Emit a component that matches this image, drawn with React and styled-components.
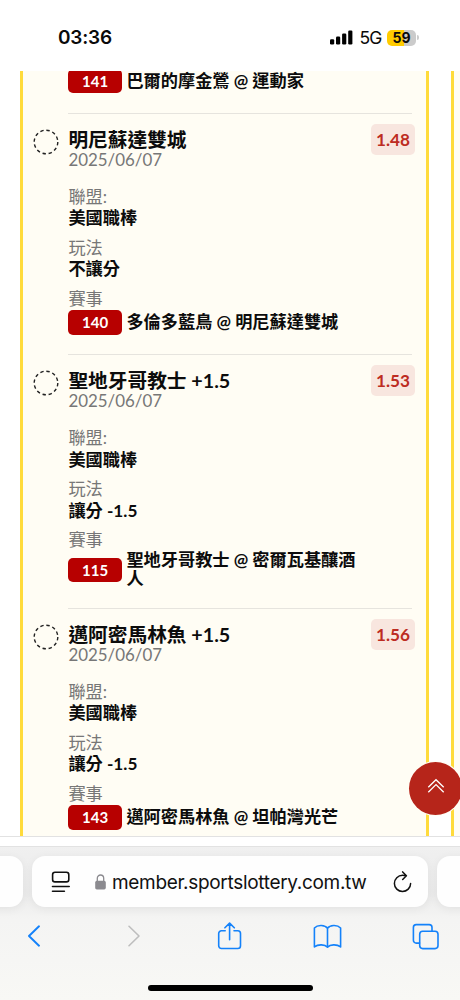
import React from "react";
import styled, { createGlobalStyle } from "styled-components";

const bets = [
    { team: "明尼蘇達雙城", date: "2025/06/07", league: "美國職棒", play: "不讓分", code: "140", match: "多倫多藍鳥 @ 明尼蘇達雙城", odds: "1.48" },
    { team: "聖地牙哥教士 +1.5", date: "2025/06/07", league: "美國職棒", play: "讓分 -1.5", code: "115", match: "聖地牙哥教士 @ 密爾瓦基釀酒人", odds: "1.53" },
    { team: "邁阿密馬林魚 +1.5", date: "2025/06/07", league: "美國職棒", play: "讓分 -1.5", code: "143", match: "邁阿密馬林魚 @ 坦帕灣光芒", odds: "1.56" },
];

function Match({ code, children }) {
    return (
        <MatchRow>
            <Code>{ code }</Code>
            <MatchName>{ children }</MatchName>
        </MatchRow>
    )
}

function Bet({ bet }) {
    return (
        <BetRow>
            <Pending viewBox="0 0 26 26">
                <circle cx="13" cy="13" r="11.8" />
            </Pending>
            <Details>
                <Team>{ bet.team }</Team>
                <BetDate>{ bet.date }</BetDate>
                <Label>聯盟:</Label>
                <Value>{ bet.league }</Value>
                <Label>玩法</Label>
                <Value>{ bet.play }</Value>
                <Label>賽事</Label>
                <Match code={ bet.code }>{ bet.match }</Match>
            </Details>
            <Odds>{ bet.odds }</Odds>
        </BetRow>
    )
}

function StatusBar() {
    return (
        <Status>
            <Clock>03:36</Clock>
            <Indicators>
                <svg width="23" height="15" viewBox="0 0 23 15">
                    <rect x="0" y="9.3" width="4.2" height="5.2" rx="1.2" />
                    <rect x="6" y="6.6" width="4.2" height="7.9" rx="1.2" />
                    <rect x="12.1" y="3.6" width="4.2" height="10.9" rx="1.2" />
                    <rect x="18.2" y="0.5" width="4.2" height="14" rx="1.2" />
                </svg>
                <Network>5G</Network>
                <Battery>59</Battery>
                <BatteryTip />
            </Indicators>
        </Status>
    )
}

function Browser() {
    return (
        <BrowserBar>
            <Tabs>
                <SideTab />
                <Address>
                    <svg width="20" height="22" viewBox="0 0 20 22" fill="none" stroke="#111" strokeWidth="1.6" strokeLinecap="round">
                        <rect x="1.6" y="1.3" width="16.2" height="9.6" rx="2.4" />
                        <path d="M1.5 15.5H18.2M1.5 20.3H13.4" />
                    </svg>
                    <Site>
                        <svg width="11" height="16" viewBox="0 0 11 16">
                            <rect x="0.2" y="6.8" width="10.6" height="8.6" rx="1.6" fill="#8b8a8f" />
                            <path d="M2.3 7V4.2a3.2 3.2 0 0 1 6.4 0V7" fill="none" stroke="#8b8a8f" strokeWidth="1.3" />
                        </svg>
                        <Url>member.sportslottery.com.tw</Url>
                    </Site>
                    <svg width="19" height="22" viewBox="0 0 19 22" fill="none" stroke="#111" strokeWidth="1.5" strokeLinecap="round" strokeLinejoin="round">
                        <path d="M17.6 12.4A8.1 8.1 0 1 1 9.5 4.3q1.9 0 3.6.4M9.7.9l3.7 3.8-3.7 3.8" />
                    </svg>
                </Address>
                <SideTab />
            </Tabs>
            <Toolbar>
                <svg width="14" height="22" viewBox="0 0 14 22">
                    <path d="M12 1.3 2 11l10 9.7" strokeWidth="1.9" />
                </svg>
                <ForwardIcon width="14" height="22" viewBox="0 0 14 22">
                    <path d="M2 1.3 12 11 2 20.7" />
                </ForwardIcon>
                <svg width="25" height="28" viewBox="0 0 25 28">
                    <path d="M8.2 8.8H4.4A2.7 2.7 0 0 0 1.7 11.5v12.3a2.7 2.7 0 0 0 2.7 2.7h16.4a2.7 2.7 0 0 0 2.7-2.7V11.5a2.7 2.7 0 0 0-2.7-2.7H17M12.6 17.8V1.3M7.9 5.8l4.7-4.7 4.7 4.7" />
                </svg>
                <svg width="29" height="25" viewBox="0 0 29 25">
                    <path d="M14.5 4.3C12.2.9 4.7.4 1.4 4v18.9c3.8-3 10.6-2.6 13.1.3 2.5-2.9 9.3-3.3 13.1-.3V4C24.3.4 16.8.9 14.5 4.3v18.7" />
                </svg>
                <svg width="27" height="27" viewBox="0 0 27 27">
                    <rect x="7.7" y="8.3" width="18.3" height="17.3" rx="3" />
                    <path d="M7.5 20.1H4.2A2.8 2.8 0 0 1 1.4 17.3V4.4A2.8 2.8 0 0 1 4.2 1.6H17.2A2.8 2.8 0 0 1 20 4.4V8" />
                </svg>
            </Toolbar>
            <HomeIndicator />
        </BrowserBar>
    )
}

export default function App() {
    return (
        <>
            <GlobalStyle />
            <Screen>
                <StatusBar />
                <Page>
                    <Card>
                        <FirstMatch>
                            <Match code="141">巴爾的摩金鶯 @ 運動家</Match>
                        </FirstMatch>
                        { bets.map((bet) => <Bet key={ bet.code } bet={ bet } />) }
                    </Card>
                    <NextCard />
                    <TopButton aria-label="top">
                        <svg width="18" height="16" viewBox="0 0 18 16" fill="none" stroke="#fff" strokeWidth="1.3">
                            <path d="M1.3 9.3 9 1.7l7.7 7.6M1.3 14.2 9 6.6l7.7 7.6" />
                        </svg>
                    </TopButton>
                </Page>
                <PageFooter />
                <Browser />
            </Screen>
        </>
    )
}

const GlobalStyle = createGlobalStyle`
    * {
        box-sizing: border-box;
    }
    body {
        margin: 0;
        background-color: #fff;
        font-family: Lato, 'Noto Sans CJK TC', sans-serif;
    }
    svg {
        display: block;
        flex-shrink: 0;
    }
`
const Screen = styled.div`
    display: flex;
    flex-direction: column;
    width: 460px;
    height: 1000px;
    overflow: hidden;
    background-color: #fff;
`
const Status = styled.div`
    display: flex;
    align-items: center;
    justify-content: space-between;
    height: 71px;
    padding: 4px 41px 0 58px;
    flex-shrink: 0;
    font-family: Inter, sans-serif;
    color: #0a0a0a;
`
const Clock = styled.div`
    font-size: 19px;
    font-weight: 600;
    line-height: 24px;
    letter-spacing: -0.2px;
`
const Indicators = styled.div`
    display: flex;
    align-items: center;
`
const Network = styled.div`
    margin-left: 6.5px;
    width: 27.5px;
    font-size: 17.5px;
    line-height: 22px;
    letter-spacing: -0.9px;
`
const Battery = styled.div`
    width: 29px;
    height: 16px;
    border-radius: 5px;
    background: linear-gradient(90deg, #ffcc00 59%, #cbcbcb 59%);
    font-size: 14px;
    font-weight: 700;
    line-height: 16px;
    text-align: center;
`
const BatteryTip = styled.div`
    width: 2px;
    height: 5px;
    margin-left: 1px;
    border-radius: 0 2px 2px 0;
    background-color: #cbcbcb;
`
const Page = styled.div`
    position: relative;
    display: flex;
    gap: 22px;
    height: 765px;
    padding-left: 20px;
    overflow: hidden;
    flex-shrink: 0;
`
const Card = styled.div`
    width: 409px;
    flex-shrink: 0;
    border: solid #ffdb3b;
    border-width: 0 3px;
    background-color: #fffdf4;
`
const NextCard = styled.div`
    width: 30px;
    flex-shrink: 0;
    border-left: 3px solid #ffdb3b;
    background-color: #fffdf4;
`
const FirstMatch = styled.div`
    margin: -2.3px 14px 0 45.4px;
    padding-bottom: 19.9px;
`
const BetRow = styled.div`
    display: flex;
    align-items: flex-start;
    padding-left: 10px;
    padding-right: 11px;
    position: relative;
`
const Pending = styled.svg`
    width: 26px;
    height: 26px;
    margin-top: 16px;
    margin-right: 9.4px;

    circle{
        fill: none;
        stroke: #222;
        stroke-width: 1.4;
        stroke-dasharray: 3.4 2.778;
    }
`
const Details = styled.div`
    flex: 1;
    padding: 15.2px 0 19.4px;
    margin-right: 3px;
    border-top: 1px solid #e6e4de;
`
const Team = styled.div`
    font-size: 19.7px;
    font-weight: 700;
    line-height: 21px;
    color: #0c0c0c;
`
const BetDate = styled.div`
    margin-bottom: 16.5px;
    font-size: 16.9px;
    line-height: 20.5px;
    color: #777;
`
const Label = styled.div`
    margin-bottom: 0.6px;
    font-size: 17.2px;
    line-height: 20.5px;
    color: #777;
`
const Value = styled.div`
    margin-bottom: 9.4px;
    font-size: 17.2px;
    font-weight: 700;
    line-height: 20.5px;
    color: #0c0c0c;
`
const MatchRow = styled.div`
    display: flex;
    align-items: center;
`
const Code = styled.div`
    width: 53.5px;
    height: 24.5px;
    margin-right: 4.5px;
    flex-shrink: 0;
    border-radius: 5px;
    background-color: #b70000;
    color: #fff;
    font-size: 15px;
    font-weight: 700;
    line-height: 24.5px;
    text-align: center;
`
const MatchName = styled.div`
    max-width: 238px;
    font-size: 17.2px;
    font-weight: 700;
    line-height: 18.5px;
    color: #0c0c0c;
`
const Odds = styled.div`
    position: absolute;
    top: 11px;
    right: 11px;
    width: 44px;
    height: 31px;
    border-radius: 5px;
    background-color: #f8e6df;
    color: #bd2c22;
    font-size: 17.2px;
    font-weight: 700;
    line-height: 31px;
    text-align: center;
`
const TopButton = styled.button`
    position: absolute;
    top: 691px;
    left: 409px;
    display: flex;
    align-items: center;
    justify-content: center;
    width: 53px;
    height: 53px;
    padding: 0 0 5px 1px;
    border: none;
    border-radius: 50%;
    background-color: #b6251a;
    box-shadow: 0 0 0 1px #fffdf4;
`
const PageFooter = styled.div`
    height: 11px;
    flex-shrink: 0;
    border: solid #e2e2e2;
    border-width: 1px 0;
    background-color: #fff;
`
const BrowserBar = styled.div`
    flex: 1;
    display: flex;
    flex-direction: column;
    background: linear-gradient(#f0f0f0 0, #ebebeb 45px, #f4f4f3 72px, #f8f8f5 100%);
`
const Tabs = styled.div`
    display: flex;
    justify-content: center;
    gap: 9px;
    margin-top: 9px;
`
const SideTab = styled.div`
    width: 40px;
    height: 51px;
    flex-shrink: 0;
    border-radius: 13px;
    background-color: #fefefe;
    box-shadow: 0 2px 10px rgba(0, 0, 0, 0.06);
`
const Address = styled.div`
    display: flex;
    align-items: center;
    justify-content: space-between;
    width: 396px;
    height: 51px;
    padding: 0 16px 0 19px;
    flex-shrink: 0;
    border-radius: 13px;
    background-color: #fefefe;
    box-shadow: 0 2px 10px rgba(0, 0, 0, 0.06);
`
const Site = styled.div`
    display: flex;
    align-items: center;
    width: 275px;
`
const Url = styled.div`
    font-family: Inter, sans-serif;
    font-size: 19px;
    line-height: 24px;
    letter-spacing: -0.32px;
    white-space: nowrap;
    color: #111;
    margin: 2px 0 0 6.5px;
`
const Toolbar = styled.div`
    display: grid;
    grid-template-columns: repeat(5, 98px);
    align-items: center;
    justify-items: center;
    justify-content: center;
    height: 30px;
    margin: 14px 1px 0 0;

    svg{
        fill: none;
        stroke: #1482fa;
        stroke-width: 1.6;
        stroke-linecap: round;
        stroke-linejoin: round;
    }
`
const ForwardIcon = styled.svg`
    margin-left: 4px;

    path{
        stroke: #bebebe;
    }
`
const HomeIndicator = styled.div`
    width: 165px;
    height: 6px;
    margin: 34px auto 0;
    border-radius: 3px;
    background-color: #000;
`
